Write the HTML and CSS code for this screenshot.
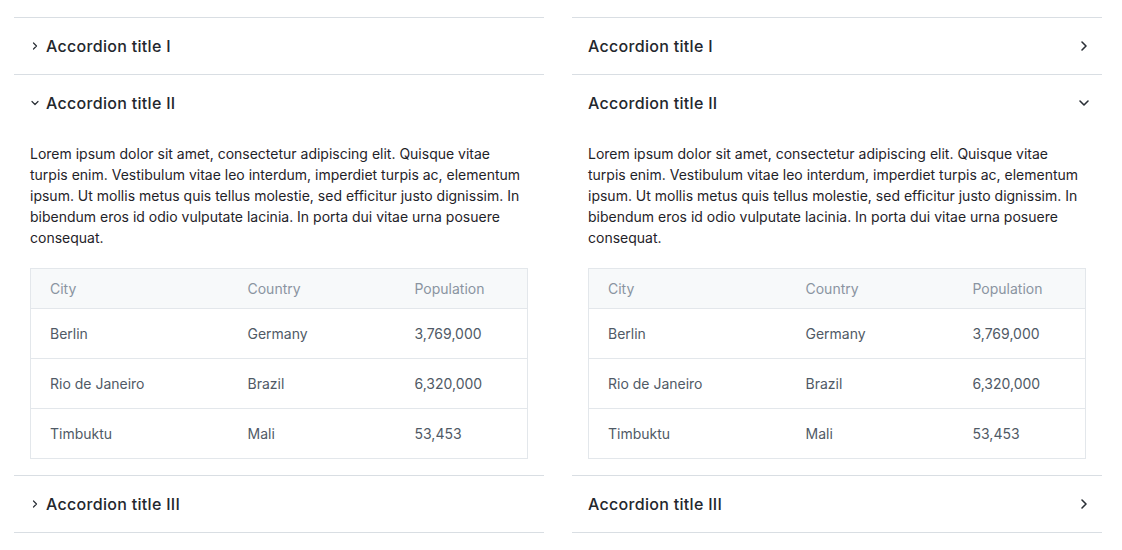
FILE: index.html
```html
<!DOCTYPE html>
<html lang="en">
<head>
<meta charset="utf-8">
<link rel="stylesheet" href="styles.css">
</head>
<body>
<div class="page">
  <div class="accordion icon-start">
    <div class="item">
      <div class="header">
        <svg class="chev" viewBox="0 0 16 16"><path d="M6 4l4 4-4 4"/></svg>
        <span class="title">Accordion title I</span>
      </div>
    </div>
    <div class="item open">
      <div class="header">
        <svg class="chev" viewBox="0 0 16 16"><path d="M4 6l4 4 4-4"/></svg>
        <span class="title">Accordion title II</span>
      </div>
      <div class="content">
        <p>Lorem ipsum dolor sit amet, consectetur adipiscing elit. Quisque vitae turpis enim. Vestibulum vitae leo interdum, imperdiet turpis ac, elementum ipsum. Ut mollis metus quis tellus molestie, sed efficitur justo dignissim. In bibendum eros id odio vulputate lacinia. In porta dui vitae urna posuere consequat.</p>
        <table>
          <thead><tr><th class="c1">City</th><th class="c2">Country</th><th>Population</th></tr></thead>
          <tbody>
            <tr><td>Berlin</td><td>Germany</td><td>3,769,000</td></tr>
            <tr><td>Rio de Janeiro</td><td>Brazil</td><td>6,320,000</td></tr>
            <tr><td>Timbuktu</td><td>Mali</td><td>53,453</td></tr>
          </tbody>
        </table>
      </div>
    </div>
    <div class="item">
      <div class="header">
        <svg class="chev" viewBox="0 0 16 16"><path d="M6 4l4 4-4 4"/></svg>
        <span class="title">Accordion title III</span>
      </div>
    </div>
  </div>

  <div class="accordion icon-end">
    <div class="item">
      <div class="header">
        <span class="title">Accordion title I</span>
        <svg class="chev" viewBox="0 0 16 16"><path d="M6 4l4 4-4 4"/></svg>
      </div>
    </div>
    <div class="item open">
      <div class="header">
        <span class="title">Accordion title II</span>
        <svg class="chev" viewBox="0 0 16 16"><path d="M4 6l4 4 4-4"/></svg>
      </div>
      <div class="content">
        <p>Lorem ipsum dolor sit amet, consectetur adipiscing elit. Quisque vitae turpis enim. Vestibulum vitae leo interdum, imperdiet turpis ac, elementum ipsum. Ut mollis metus quis tellus molestie, sed efficitur justo dignissim. In bibendum eros id odio vulputate lacinia. In porta dui vitae urna posuere consequat.</p>
        <table>
          <thead><tr><th class="c1">City</th><th class="c2">Country</th><th>Population</th></tr></thead>
          <tbody>
            <tr><td>Berlin</td><td>Germany</td><td>3,769,000</td></tr>
            <tr><td>Rio de Janeiro</td><td>Brazil</td><td>6,320,000</td></tr>
            <tr><td>Timbuktu</td><td>Mali</td><td>53,453</td></tr>
          </tbody>
        </table>
      </div>
    </div>
    <div class="item">
      <div class="header">
        <span class="title">Accordion title III</span>
        <svg class="chev" viewBox="0 0 16 16"><path d="M6 4l4 4-4 4"/></svg>
      </div>
    </div>
  </div>
</div>
</body>
</html>
```
FILE: styles.css
```css
* { box-sizing: border-box; }
html, body { margin: 0; padding: 0; background: #fff; }
body { font-family: Inter, "Noto Sans", sans-serif; color: #1f2329; }
.page {
  display: flex;
  gap: 28px;
  padding: 17px 0 0 14px;
}
.accordion {
  width: 530px;
  border-top: 1px solid #d9dee3;
}
.item { border-bottom: 1px solid #d9dee3; }
.header {
  height: 56px;
  display: flex;
  align-items: center;
  padding: 0 16px;
  gap: 5px;
}
.icon-end .header { justify-content: space-between; padding-right: 10px; }
.title {
  font-size: 16px;
  font-weight: 500;
  color: #23272d;
  letter-spacing: 0.3px;
}
.chev {
  width: 16px;
  height: 16px;
  fill: none;
  stroke: #2a2f36;
  stroke-width: 1.6;
  stroke-linecap: round;
  stroke-linejoin: round;
}
.icon-start .chev { width: 12px; height: 12px; margin-left: -1px; }
.content { padding: 12px 16px 16px 16px; }
.content p {
  margin: 0 0 20px 0;
  font-size: 14px;
  line-height: 21px;
  letter-spacing: 0;
  color: #1f2329;
}
table {
  width: 100%;
  border-collapse: collapse;
  border: 1px solid #e3e7eb;
  font-size: 14px;
}
th {
  background: #f7f9fa;
  color: #8a94a1;
  font-weight: 400;
  text-align: left;
  height: 40px;
  padding: 0 18px;
  border-bottom: 1px solid #e3e7eb;
}
td {
  color: #505a66;
  height: 50px;
  padding: 0 18px;
  border-bottom: 1px solid #e3e7eb;
}
th.c1 { width: 199px; }
th.c2 { width: 167px; }
th:first-child, td:first-child { padding-left: 19px; }
```
